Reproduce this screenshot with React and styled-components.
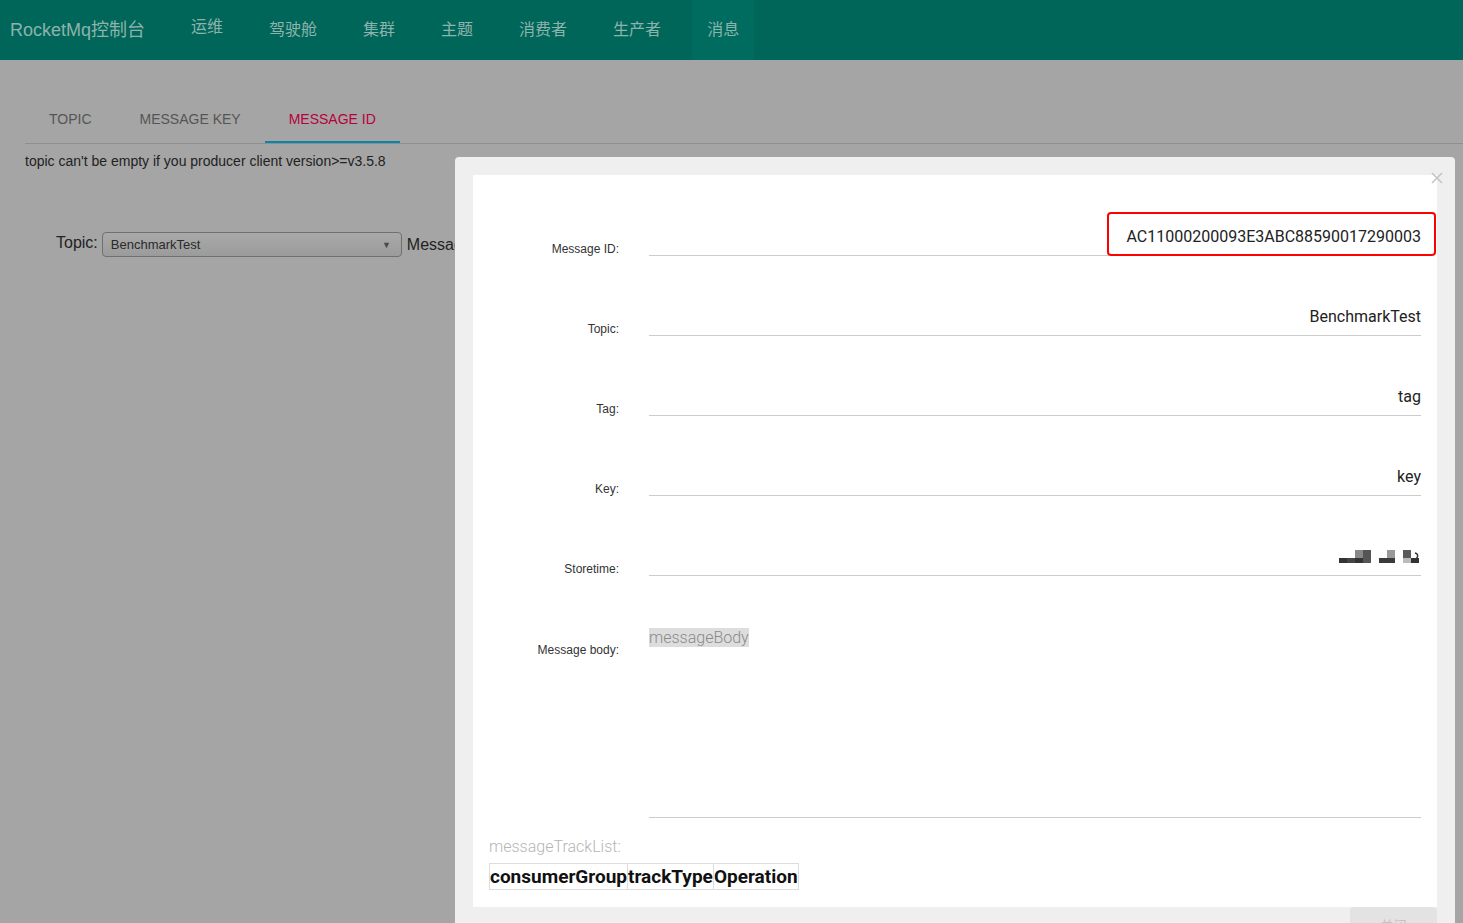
import React from "react";
import styled, { createGlobalStyle } from "styled-components";

const Global = createGlobalStyle`
  html, body {
    margin: 0;
    padding: 0;
    height: 923px;
    overflow: hidden;
    background: #a5a5a5;
    font-family: "Liberation Sans", "Noto Sans CJK SC", sans-serif;
  }
`;

const Page = styled.div`
  position: relative;
  height: 923px;
  background: #a5a5a5;
`;

const Header = styled.div`
  height: 60px;
  background: #006659;
  display: flex;
  align-items: center;
`;

const Brand = styled.div`
  padding-left: 10px;
  font-size: 18px;
  line-height: 54px;
  color: #8db3ac;
  margin-right: 31px;
`;

const Nav = styled.div`
  display: flex;
  gap: 16px;
  height: 60px;
`;

const NavItem = styled.div`
  padding: 0 15px;
  line-height: ${(p) => (p.$raised ? "54px" : "60px")};
  font-size: 16px;
  color: #8db3ac;
  background: ${(p) => (p.$active ? "#006c5f" : "transparent")};
`;

const Content = styled.div`
  padding: 35px 0 0 25px;
`;

const Tabs = styled.div`
  display: flex;
  height: 48px;
  border-bottom: 1px solid #8f8f8f;
`;

const Tab = styled.div`
  padding: 0 24px;
  display: flex;
  align-items: center;
  font-size: 14px;
  color: ${(p) => (p.$active ? "#b8003c" : "#555")};
  box-shadow: ${(p) => (p.$active ? "inset 0 -2px 0 #0b84aa" : "none")};
`;

const Hint = styled.div`
  margin-top: 9px;
  font-size: 14px;
  line-height: 17px;
  color: #222;
`;

const QueryRow = styled.div`
  margin-top: 62px;
  padding-left: 31px;
  display: flex;
  align-items: center;
  gap: 4px;
  font-size: 16px;
  color: #222;

  & > span:first-child {
    margin-top: -4px;
  }
`;

const Select = styled.div`
  width: 300px;
  height: 25px;
  border: 1px solid #707070;
  border-radius: 4px;
  background: linear-gradient(#a9a9a9, #9b9b9b);
  display: flex;
  align-items: center;
  justify-content: space-between;
  padding: 0 10px 0 8px;
  box-sizing: border-box;
  margin-right: 1px;
  font-size: 13px;
  color: #2a2a2a;

  span:last-child {
    font-size: 9px;
    color: #4a4a4a;
  }
`;

const Modal = styled.div`
  position: absolute;
  left: 455px;
  top: 157px;
  width: 964px;
  padding: 18px 18px 0;
  background: #efefef;
  border-radius: 4px;
  font-family: Roboto, "Noto Sans CJK SC", sans-serif;
`;

const CloseX = styled.div`
  position: absolute;
  z-index: 2;
  top: 12px;
  right: 12px;
  width: 12px;
  height: 12px;
  color: #c4c4c4;
`;

const ModalBody = styled.div`
  position: relative;
  background: #fff;
  padding: 41px 16px 17px;
  display: flex;
  flex-direction: column;
  gap: 40px;
`;

const FormRow = styled.div`
  display: grid;
  grid-template-columns: 130px 1fr;
  column-gap: 30px;
`;

const Label = styled.div`
  font-family: "Liberation Sans", sans-serif;
  font-size: 12px;
  line-height: 14px;
  color: #333;
  text-align: right;
  align-self: ${(p) => (p.$top ? "start" : "end")};
  padding-top: ${(p) => (p.$top ? "27px" : "0")};
  white-space: nowrap;
`;

const Value = styled.div`
  height: 40px;
  border-bottom: 1px solid #ccc;
  display: flex;
  align-items: center;
  justify-content: flex-end;
  padding-top: 2px;
  box-sizing: border-box;
  font-size: 16px;
  color: #222;
`;

const BodyArea = styled.div`
  height: 202px;
  border-bottom: 1px solid #ccc;
  box-sizing: border-box;
  padding-top: 12px;
`;

const BodyText = styled.span`
  background: #ddd;
  color: #8a8a8a;
  font-size: 16px;
  font-weight: 300;
  line-height: 19px;
`;

const TrackSection = styled.div`
  margin-top: -21px;
`;

const TrackTitle = styled.div`
  font-size: 16px;
  font-weight: 300;
  line-height: 19px;
  color: #b5b5b5;
  margin-bottom: 7px;
`;

const TrackTable = styled.table`
  border-collapse: collapse;

  th {
    border: 1px solid #ddd;
    height: 25px;
    padding: 0;
    font-size: 19px;
    font-weight: 700;
    color: #111;
  }
`;

const Highlight = styled.div`
  position: absolute;
  left: 634px;
  top: 37px;
  width: 325px;
  height: 40px;
  border: 2px solid #f00;
  border-radius: 4px;
`;

const Footer = styled.div`
  display: flex;
  justify-content: flex-end;
  height: 40px;
`;

const CloseButton = styled.div`
  width: 87px;
  height: 34px;
  border-radius: 4px 4px 0 0;
  background: #e3e3e3;
  color: #c2c2c2;
  font-size: 13px;
  display: flex;
  justify-content: center;
  padding-top: 8px;
  box-sizing: border-box;
`;

const BlurredTime = () => (
  <svg width="82" height="13" viewBox="0 0 82 13">
    <rect x="0" y="8" width="24" height="5" fill="#333" />
    <rect x="8" y="8" width="8" height="5" fill="#444" />
    <rect x="16" y="0" width="8" height="8" fill="#888" />
    <rect x="24" y="0" width="8" height="13" fill="#555" />
    <rect x="40" y="8" width="16" height="5" fill="#3a3a3a" />
    <rect x="48" y="0" width="8" height="8" fill="#999" />
    <rect x="64" y="0" width="8" height="8" fill="#5a5a5a" />
    <rect x="64" y="8" width="8" height="5" fill="#bbb" />
    <rect x="72" y="8" width="8" height="5" fill="#333" />
    <path d="M76 3 q4 1 2 5 q-2 3 -6 4" stroke="#333" strokeWidth="1.5" fill="none" />
  </svg>
);

const navItems = ["运维", "驾驶舱", "集群", "主题", "消费者", "生产者", "消息"];

const fields = [
  ["Message ID:", "AC11000200093E3ABC88590017290003"],
  ["Topic:", "BenchmarkTest"],
  ["Tag:", "tag"],
  ["Key:", "key"],
  ["Storetime:", <BlurredTime key="t" />],
];

export default function App() {
  return (
    <Page>
      <Global />
      <Header>
        <Brand>RocketMq控制台</Brand>
        <Nav>
          {navItems.map((n, i) => (
            <NavItem key={n} $raised={i === 0} $active={n === "消息"}>
              {n}
            </NavItem>
          ))}
        </Nav>
      </Header>

      <Content>
        <Tabs>
          <Tab>TOPIC</Tab>
          <Tab>MESSAGE KEY</Tab>
          <Tab $active>MESSAGE ID</Tab>
        </Tabs>
        <Hint>topic can't be empty if you producer client version&gt;=v3.5.8</Hint>
        <QueryRow>
          <span>Topic:</span>
          <Select>
            <span>BenchmarkTest</span>
            <span>▼</span>
          </Select>
          <span>Message ID:</span>
        </QueryRow>
      </Content>

      <Modal>
        <CloseX>
          <svg width="12" height="12" viewBox="0 0 12 12">
            <path d="M1 1 L11 11 M11 1 L1 11" stroke="currentColor" strokeWidth="1.6" />
          </svg>
        </CloseX>
        <ModalBody>
          {fields.map(([label, value]) => (
            <FormRow key={label}>
              <Label>{label}</Label>
              <Value>{value}</Value>
            </FormRow>
          ))}
          <FormRow>
            <Label $top>Message body:</Label>
            <BodyArea>
              <BodyText>messageBody</BodyText>
            </BodyArea>
          </FormRow>
          <TrackSection>
            <TrackTitle>messageTrackList:</TrackTitle>
            <TrackTable>
              <thead>
                <tr>
                  <th>consumerGroup</th>
                  <th>trackType</th>
                  <th>Operation</th>
                </tr>
              </thead>
            </TrackTable>
          </TrackSection>
          <Highlight />
        </ModalBody>
        <Footer>
          <CloseButton>关闭</CloseButton>
        </Footer>
      </Modal>
    </Page>
  );
}
